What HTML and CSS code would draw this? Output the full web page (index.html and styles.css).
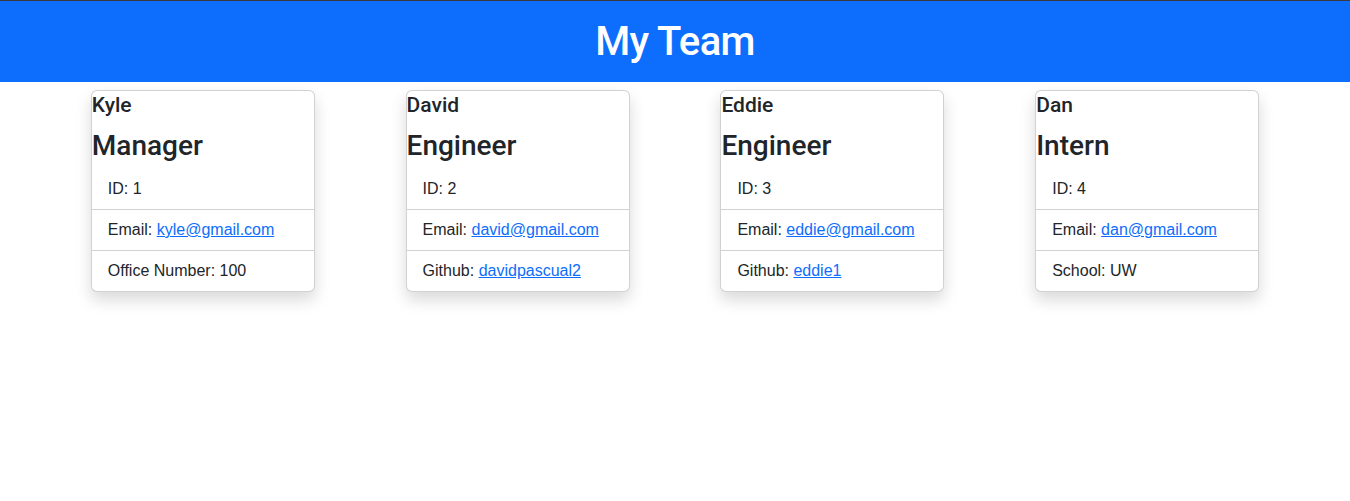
FILE: index.html
```html
<!DOCTYPE html>
<html lang="en">
<head>
<meta charset="utf-8">
<title>My Team</title>
<link rel="stylesheet" href="styles.css">
</head>
<body>
<header class="banner">
  <h1 class="banner-title">My Team</h1>
</header>
<main class="team">
  <div class="card">
    <h5 class="card-name">Kyle</h5>
    <h3 class="card-role">Manager</h3>
    <ul class="info">
      <li class="info-item">ID: 1</li>
      <li class="info-item">Email: <a href="#">kyle@gmail.com</a></li>
      <li class="info-item">Office Number: 100</li>
    </ul>
  </div>
  <div class="card">
    <h5 class="card-name">David</h5>
    <h3 class="card-role">Engineer</h3>
    <ul class="info">
      <li class="info-item">ID: 2</li>
      <li class="info-item">Email: <a href="#">david@gmail.com</a></li>
      <li class="info-item">Github: <a href="#">davidpascual2</a></li>
    </ul>
  </div>
  <div class="card">
    <h5 class="card-name">Eddie</h5>
    <h3 class="card-role">Engineer</h3>
    <ul class="info">
      <li class="info-item">ID: 3</li>
      <li class="info-item">Email: <a href="#">eddie@gmail.com</a></li>
      <li class="info-item">Github: <a href="#">eddie1</a></li>
    </ul>
  </div>
  <div class="card">
    <h5 class="card-name">Dan</h5>
    <h3 class="card-role">Intern</h3>
    <ul class="info">
      <li class="info-item">ID: 4</li>
      <li class="info-item">Email: <a href="#">dan@gmail.com</a></li>
      <li class="info-item">School: UW</li>
    </ul>
  </div>
</main>
</body>
</html>
```
FILE: styles.css
```css
html, body {
  margin: 0;
  padding: 0;
  background: #fff;
}
body {
  min-height: 501px;
  font-family: "Liberation Sans", Arial, sans-serif;
  font-size: 16px;
  color: #212529;
}
.banner {
  border-top: 1px solid #3a3a3a;
  background: #0d6efd;
  height: 81px;
  display: flex;
  align-items: center;
  justify-content: center;
}
.banner-title {
  margin: 0;
  color: #fff;
  font-family: Roboto, "Liberation Sans", sans-serif;
  font-size: 40px;
  font-weight: 500;
  letter-spacing: -0.6px;
  line-height: 48px;
}
.team {
  display: flex;
  justify-content: space-evenly;
  align-items: flex-start;
  padding: 8px 0 40px;
}
.card {
  box-sizing: border-box;
  width: 224px;
  background: #fff;
  border: 1px solid rgba(0, 0, 0, 0.175);
  border-radius: 6px;
  box-shadow: 0 8px 16px rgba(0, 0, 0, 0.15);
  overflow: hidden;
}
.card-name {
  margin: 0 0 12px;
  padding-top: 2px;
  font-family: Roboto, "Liberation Sans", sans-serif;
  font-size: 21px;
  font-weight: 500;
  line-height: 24px;
}
.card-role {
  margin: 0 0 6px;
  font-family: Roboto, "Liberation Sans", sans-serif;
  font-size: 28px;
  font-weight: 500;
  line-height: 34px;
}
.info {
  list-style: none;
  margin: 0;
  padding: 0;
}
.info-item {
  padding: 8px 16px;
  line-height: 24px;
}
.info-item + .info-item {
  border-top: 1px solid rgba(0, 0, 0, 0.175);
}
.info-item a {
  color: #0d6efd;
  text-decoration: underline;
}
```
